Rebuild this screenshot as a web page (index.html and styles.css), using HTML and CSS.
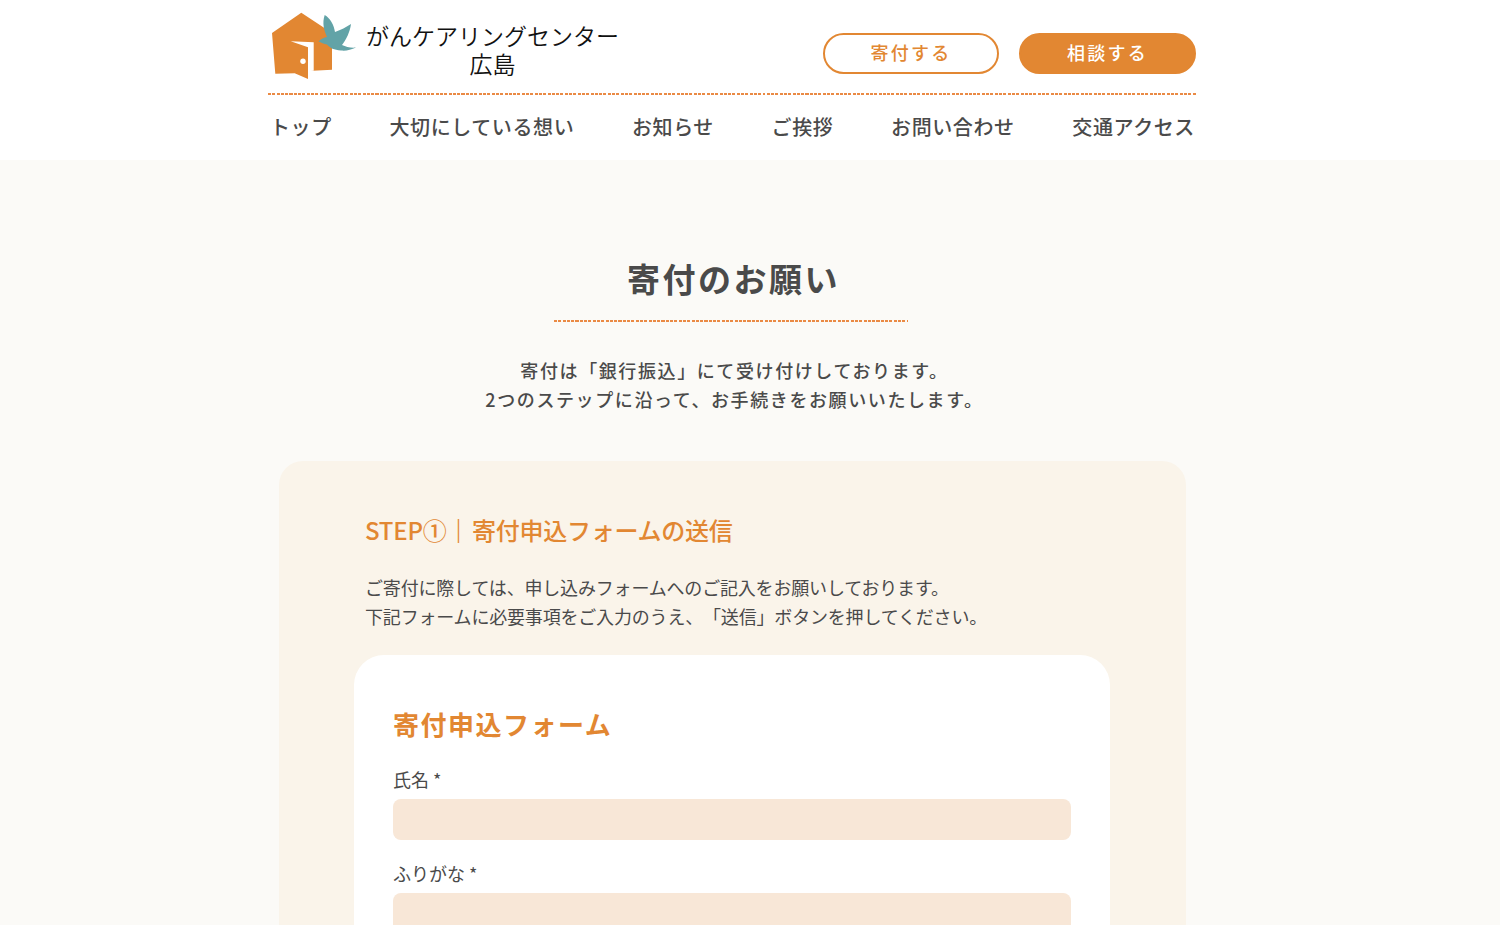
FILE: index.html
```html
<!DOCTYPE html>
<html lang="ja">
<head>
<meta charset="utf-8">
<title>寄付のお願い | がんケアリングセンター広島</title>
<link rel="stylesheet" href="styles.css">
</head>
<body>
<header class="site-header">
  <div class="header-inner">
    <div class="header-top">
      <a class="logo" href="#">
        <svg class="logo-mark" viewBox="0 0 86 70" width="86" height="70" aria-hidden="true">
          <path fill="#e28732" d="M31.3 .7 L2 21 L5.3 61.7 L24.7 61.3 L38 67 L38 59 L62 57.7 L62 21 Z"/>
          <path fill="#fff" d="M20.7 29.3 L43.7 30.3 L43.7 58.7 L38 59.3 L38 35.3 Z"/>
          <circle cx="33" cy="49.3" r="2.7" fill="#fff"/>
          <path fill="#62a3a7" d="M54.7 3 C60 6 64 13 65 20 C71 18 76 15 81 12 C80 20 76 28 72 33 C76 35 81 36 86 35.5 C81 38 76 39 71 38.5 C64 38 60 36 57 32.5 C54 32 51 30.5 48.5 29.5 C51 27 54 25.5 57 25 C54 18 52 11 54.7 3 Z"/>
        </svg>
        <span class="logo-text">
          <span class="logo-name">がんケアリングセンター</span>
          <span class="logo-place">広島</span>
        </span>
      </a>
      <div class="header-buttons">
        <a class="btn btn-outline" href="#">寄付する</a>
        <a class="btn btn-solid" href="#">相談する</a>
      </div>
    </div>
    <nav class="main-nav">
      <a href="#">トップ</a>
      <a href="#">大切にしている想い</a>
      <a href="#">お知らせ</a>
      <a href="#">ご挨拶</a>
      <a href="#">お問い合わせ</a>
      <a href="#">交通アクセス</a>
    </nav>
  </div>
</header>
<main class="page">
  <div class="page-inner">
    <h1 class="page-title">寄付のお願い</h1>
    <p class="lead">寄付は「銀行振込」にて受け付けしております。<br>2つのステップに沿って、お手続きをお願いいたします。</p>
    <section class="step-card">
      <h2 class="step-title">STEP①<span class="step-bar">｜</span>寄付申込フォームの送信</h2>
      <p class="step-text">ご寄付に際しては、申し込みフォームへのご記入をお願いしております。<br>下記フォームに必要事項をご入力のうえ、「送信」ボタンを押してください。</p>
      <form class="form-card">
        <h3 class="form-title">寄付申込フォーム</h3>
        <label class="field"><span class="field-label">氏名 *</span><input class="field-input" type="text"></label>
        <label class="field"><span class="field-label">ふりがな *</span><input class="field-input" type="text"></label>
      </form>
    </section>
  </div>
</main>
</body>
</html>
```
FILE: styles.css
```css
* { box-sizing: border-box; }
html, body { margin: 0; height: 925px; overflow: hidden; }
body {
  font-family: "Noto Sans CJK JP", "Noto Sans", sans-serif;
  color: #4a4a4a;
  background: #fbfaf7;
  text-spacing-trim: space-all;
}
a { color: inherit; text-decoration: none; }
.site-header { background: #fff; height: 160px; }
.header-inner { width: 928px; margin-left: 268px; }
.header-top {
  height: 95px;
  display: flex;
  align-items: flex-start;
  justify-content: space-between;
  background: repeating-linear-gradient(90deg, #ea8a45 0 3px, transparent 3px 4.3px) left bottom / 100% 2px no-repeat;
}
.logo { display: flex; padding-top: 12px; }
.logo-mark { display: block; margin-left: 2px; }
.logo-text {
  display: flex;
  flex-direction: column;
  align-items: center;
  margin: 9px 0 0 10px;
  font-weight: 350;
  color: #111;
  line-height: 28px;
}
.logo-name { font-size: 23px; }
.logo-place { font-size: 23px; }
.header-buttons { display: flex; gap: 20px; padding-top: 33px; }
.btn {
  width: 177px;
  height: 41px;
  padding-bottom: 3px;
  border-radius: 21px;
  font-size: 18px;
  font-weight: 500;
  letter-spacing: 2.2px;
  display: flex;
  align-items: center;
  justify-content: center;
  border: 2px solid #e28732;
}
.btn-outline { width: 176px; color: #e28732; background: #fff; }
.btn-solid { color: #fff; background: #e28732; }
.main-nav {
  display: flex;
  justify-content: space-between;
  padding: 17px 1px 0 2px;
  font-size: 20px;
  font-weight: 500;
  letter-spacing: .6px;
  line-height: 30px;
}
.page-inner { width: 928px; margin-left: 268px; }
.page-title {
  width: 354px;
  margin: 0 0 0 286px;
  padding: 93px 0 19px 5px;
  text-align: center;
  font-size: 33px;
  font-weight: 700;
  letter-spacing: 2.5px;
  line-height: 50px;
  background: repeating-linear-gradient(90deg, #ea8a45 0 3px, transparent 3px 4.3px) left bottom / 100% 2px no-repeat;
}
.lead {
  margin: 34px 0 0;
  padding-left: 5px;
  text-align: center;
  font-size: 18px;
  font-weight: 500;
  letter-spacing: 1.6px;
  line-height: 29px;
}
.step-card {
  width: 907px;
  height: 600px;
  margin: 47px 0 0 11px;
  padding: 50px 76px 0 75px;
  background: #faf4ea;
  border-radius: 24px;
}
.step-title {
  margin: 0 0 0 11px;
  font-size: 24px;
  font-weight: 500;
  letter-spacing: -.25px;
  color: #e28732;
  line-height: 38px;
}
.step-bar { font-weight: 900; letter-spacing: 1.5px; }
.step-text {
  margin: 24px 0 0 11px;
  font-size: 18px;
  font-weight: 400;
  letter-spacing: -.18px;
  line-height: 29px;
}
.form-card {
  margin-top: 24px;
  height: 400px;
  padding: 49px 39px;
  background: #fff;
  border-radius: 30px;
}
.form-title {
  margin: 0;
  font-size: 26px;
  font-weight: 700;
  color: #e28732;
  letter-spacing: 1.5px;
  line-height: 40px;
}
.field { display: block; margin-top: 22px; }
.field + .field { margin-top: 20px; }
.field-label { display: block; font-size: 18px; line-height: 27px; }
.field-input {
  display: block;
  width: 100%;
  height: 41px;
  margin-top: 6px;
  border: 0;
  border-radius: 8px;
  background: #f8e7d7;
}
```
